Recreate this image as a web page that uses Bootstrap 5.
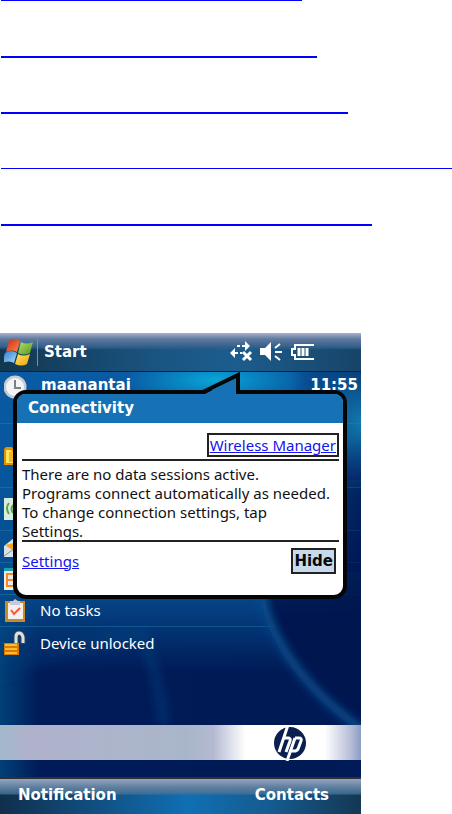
<!DOCTYPE html>
<html lang="en">
<head>
<meta charset="utf-8">
<meta name="viewport" content="width=device-width, initial-scale=1">
<title>Connectivity</title>
<link href="https://cdn.jsdelivr.net/npm/bootstrap@5.3.0/dist/css/bootstrap.min.css" rel="stylesheet">
<style>
body{background:#fff;font-family:"Noto Sans",sans-serif;font-size:15px;line-height:19px;color:#111}
.rules{height:333px;padding-left:1px}
.rule{height:56px;border-top:2px solid #00f;max-width:100%}
.rule-thin{border-top-width:1px}
.w-a{width:301px}.w-b{width:316px}.w-c{width:347px}.w-d{width:100%}.w-e{width:371px}
.device{max-width:361px;color:#fff;background:#001b58}
.bar-top{height:39px;border-bottom:1px solid #10202c;padding:0 46px 0 4px;background:linear-gradient(#a9b2cc 0,#60799f 6px,#315f8a 14px,transparent 17px),linear-gradient(90deg,#12374f,#1a5583 45%,#1c5d8e 65%,#174468)}
.start{border-left:1px solid #5e9bc2!important;padding-left:6px!important;height:27px;line-height:26px;margin-left:4px}
.strong-text{font-family:"DejaVu Sans","Noto Sans",sans-serif;font-weight:700;font-size:15px}
.home{background:
 radial-gradient(ellipse 90px 26px at 215px 8px,#08a6d8,transparent),
 radial-gradient(ellipse 60px 70px at 361px 50px,#1278ae,transparent),
 linear-gradient(90deg,transparent 80%,rgba(0,27,88,.8) 100%),
 linear-gradient(180deg,#0a5ba3 0,#07559b 120px,#05498b 220px,transparent 300px),
 linear-gradient(90deg,#004078,#001b58 40px,#001a55)}
.home-scene{left:0;top:0;width:100%;height:100%}
.item{height:32px;padding-left:4px;border-bottom:1px solid rgba(36,130,175,.45)}
.item svg,.item-label{position:relative}
.item-label{margin-left:14px}
.item-first{height:52px;padding-right:3px}
.item-first .item-label{margin-left:13px}
.item-folder{height:64px}.item-signal{height:43px}.item-last{border:0}
.band{height:35px;margin-top:66px;margin-bottom:17px;padding-right:54px;background:linear-gradient(90deg,#a3b9cb 0,#b0b1cb 8%,#adb4cb 25%,#a9b6ca 52%,#b4b9d1 59%,#fff 68%,#fff 90%,#b8bed8 97%,#8c9dc4)}
.bar-bottom{height:39px;border-top:2px solid #302f34;padding:0 32px 5px 18px;background:linear-gradient(#92a5bf 0,#60809f 8px,rgba(66,112,150,.8) 15px,transparent 16px),linear-gradient(90deg,#102f4c,#106fb3 52%,#155b8f 75%,#143754)}
.soft{color:#fff;background:none;border:0;padding:0}
.bubble{left:13px;top:57px;width:calc(100% - 27px);border:4px solid #050505;border-radius:13px;background:#fff;color:#111;height:209px}
.bubble-head{height:29px;line-height:28px;background:#1671b5;color:#fff;padding-left:11px;border-radius:8px 8px 0 0}
.tail{left:186px;top:-22px}
.bubble-body{padding:10px 4px 0 5px}
.blue-link{color:#1414ee;text-decoration:underline}
.blue-link:hover{color:#00a}
.wm{border:2px solid #222;height:24px;line-height:20px;padding:0 1px}
.message{border-top:2px solid #222;border-bottom:2px solid #222;margin-top:2px;padding-top:4px;height:83px}
.hide-btn{border:2px solid #222;background:#c7d9ec;height:26px;line-height:22px;padding:0 1px;color:#080808}
.foot{padding:6px 3px 0 0}
</style>
<script src="https://cdn.jsdelivr.net/npm/bootstrap@5.3.0/dist/js/bootstrap.bundle.min.js"></script>
</head>
<body>
<div class="rules overflow-hidden">
 <div class="rule rule-thin w-a"></div><div class="rule w-b"></div><div class="rule w-c"></div><div class="rule rule-thin w-d"></div><div class="rule w-e"></div>
</div>
<main class="device w-100 position-relative">
 <header class="bar-top d-flex align-items-center">
  <svg width="29" height="29" viewBox="0 0 29 29" aria-hidden="true">
   <defs><linearGradient id="fr" x2="1" y2="1"><stop stop-color="#c82a10"/><stop offset="1" stop-color="#ff8a50"/></linearGradient><linearGradient id="fg" x2="1" y2="1"><stop stop-color="#b9e06b"/><stop offset="1" stop-color="#4c9a1c"/></linearGradient><linearGradient id="fb" x2="1" y2="1"><stop stop-color="#2c78cc"/><stop offset="1" stop-color="#a8dcff"/></linearGradient><linearGradient id="fy" x2="1" y2="1"><stop stop-color="#ffe760"/><stop offset="1" stop-color="#f0a010"/></linearGradient></defs>
   <path fill="url(#fr)" d="M5 3q5-4 11 0l-3 11q-5-3-11 0z"/><path fill="url(#fg)" d="M17 4q5 3 12 0l-3 11q-6 3-12 0z"/><path fill="url(#fb)" d="M1 15q6-4 12 0l-3 10q-4-3-12 0z"/><path fill="url(#fy)" d="M14 16q5 3 12 0l-3 10q-5 3-12 0z"/>
  </svg>
  <button type="button" class="soft start strong-text">Start</button>
  <svg class="ms-auto" width="86" height="24" viewBox="0 0 86 24" fill="none" stroke="#fff" stroke-width="2" aria-hidden="true">
   <path d="M8 6h3m2 0h3M6 13h3m2 0h2"/><path fill="#fff" stroke="none" d="m16 1 5 5-5 5zM6 8v10l-5-5zM31 8h5l6-6v19l-6-6h-5z"/><path stroke-width="3" d="m14 12 8 8m0-8-8 8"/>
   <path d="m46 8 5-4m-5 8h7m-7 4 5 4M85 5H66v4h-3v6h3v4h19"/><path stroke-width="3" d="M70 8v8m4-8v8m4-8v8"/>
  </svg>
 </header>
 <section class="home position-relative">
  <svg class="home-scene position-absolute" viewBox="0 0 361 404" preserveAspectRatio="none" aria-hidden="true">
   <defs><linearGradient id="arc" x2="1"><stop stop-color="#063f7b" stop-opacity=".1"/><stop offset="1" stop-color="#07518b" stop-opacity=".35"/></linearGradient><linearGradient id="night" x2="0" y2="1"><stop stop-color="#001650" stop-opacity="0"/><stop offset=".6" stop-color="#001650"/></linearGradient><filter id="soften"><feGaussianBlur stdDeviation="4"/></filter></defs>
   <path filter="url(#soften)" fill="url(#arc)" d="M0 285q80-30 145-30 20 50 25 98h-12q-5-45-18-82Q60 278 0 315z"/>
   <path filter="url(#soften)" fill="url(#night)" d="M265 235q19 70 106 130V60q-75 36-106 175z"/>
   <path filter="url(#soften)" fill="none" stroke="#0a5695" stroke-width="7" d="M262 225q19 76 106 136"/>
  </svg>
  <div class="item item-first d-flex align-items-start justify-content-between">
   <div class="d-flex"><svg width="24" height="29" viewBox="0 0 24 29" aria-hidden="true"><circle cx="11" cy="15" r="11.5" fill="#c5cbd3"/><circle cx="11" cy="15" r="9" fill="#f3f4f6"/><path fill="none" stroke="#7b8086" stroke-width="2" d="M11 8v8h6"/></svg><span class="item-label strong-text pt-1">maanantai</span></div>
   <span class="item-label strong-text pt-1">11:55</span>
  </div>
  <div class="item item-folder d-flex align-items-center"><svg width="22" height="18" viewBox="0 0 22 18" aria-hidden="true"><path fill="#e88f00" d="M0 2l2-2h6l2 3h10v15H0z"/><path fill="#ffe35a" d="M2 3h5l2 3v10H2z"/><path fill="#f5b51e" d="M5 5h13v10H5z"/></svg></div>
  <div class="item item-signal d-flex align-items-center"><svg width="20" height="22" viewBox="0 0 20 22" aria-hidden="true"><path fill="#d8ecdc" d="M0 0h20v22H0z"/><path fill="none" stroke="#58a04e" stroke-width="2" d="M5 5q-4 5 0 11M9 7q-3 4 0 8"/></svg></div>
  <div class="item d-flex align-items-center"><svg width="20" height="20" viewBox="0 0 20 20" aria-hidden="true"><path fill="#dce3e8" d="m0 9 10-8 10 8v11H0z"/><path fill="#f6a61c" d="m1 8 9-2 9 3-9 5z"/><path fill="none" stroke="#8995a0" d="m0 19 10-7 10 7"/></svg></div>
  <div class="item d-flex align-items-center"><svg width="20" height="22" viewBox="0 0 20 22" aria-hidden="true"><path fill="#e8edf0" d="M0 0h20v22H0z"/><path fill="#16a3aa" d="M0 0h20v3H0z"/><path fill="none" stroke="#f28a28" stroke-width="2" d="M3 6h14v12H3zM3 12h14"/></svg></div>
  <div class="item d-flex align-items-center"><svg width="22" height="24" viewBox="0 0 22 24" aria-hidden="true"><path fill="#c98b25" d="M1 2h20v21H1z"/><path fill="#f4f0ef" d="M4 4h15v16H4z"/><path fill="#c7c8dc" d="M6 2h3l2-2 3 2h2v4H6z"/><path fill="none" stroke="#f35a38" stroke-width="2" d="m7 11 3 4 6-6"/></svg><span class="item-label">No tasks</span></div>
  <div class="item item-last d-flex align-items-center"><svg width="22" height="24" viewBox="0 0 22 24" aria-hidden="true"><path fill="none" stroke="#34485d" stroke-width="5" d="M12 13V6q0-4 3-4t4 4v7"/><path fill="none" stroke="#e1e1dc" stroke-width="3" d="M12 13V6q0-4 3-4t4 4v6"/><path fill="#db7900" d="M0 12h15v12H0z"/><path stroke="#ffbd2e" stroke-width="2" d="M1 14h12M1 18h12M1 22h12"/></svg><span class="item-label">Device unlocked</span></div>
  <div class="d-flex flex-column"><div class="band position-relative d-flex justify-content-end align-items-center">
   <svg width="34" height="36" viewBox="0 0 34 36" role="img" aria-label="HP"><circle cx="17" cy="18" r="16" fill="#0a1f50"/><path fill="none" stroke="#fff" stroke-width="3" stroke-linejoin="round" d="M15 0 6 27M11 13h4q3 0 2 3l-4 11M22 13l-8 23M22 13h4q3 0 2 3l-3 8q-1 2-4 2h-3"/></svg>
  </div></div>
 </section>
 <footer class="bar-bottom d-flex align-items-center justify-content-between"><button type="button" class="soft strong-text">Notification</button><button type="button" class="soft strong-text">Contacts</button></footer>

 <section class="bubble position-absolute" aria-label="Connectivity">
  <div class="bubble-head strong-text">Connectivity</div>
  <svg class="tail position-absolute" width="40" height="23" viewBox="0 0 40 23" aria-hidden="true"><path fill="#1671b5" d="M0 23 36 4v19z"/><path fill="none" stroke="#050505" stroke-width="4" d="M0 20 35 3v19"/></svg>
  <div class="bubble-body">
   <div class="d-flex justify-content-end"><a href="#" class="blue-link wm">Wireless Manager</a></div>
   <div class="message text-nowrap">There are no data sessions active.<br>Programs connect automatically as needed.<br>To change connection settings, tap<br>Settings.</div>
   <div class="foot d-flex justify-content-between align-items-center"><a href="#" class="blue-link">Settings</a><button type="button" class="hide-btn strong-text">Hide</button></div>
  </div>
 </section>
</main>
</body>
</html>
